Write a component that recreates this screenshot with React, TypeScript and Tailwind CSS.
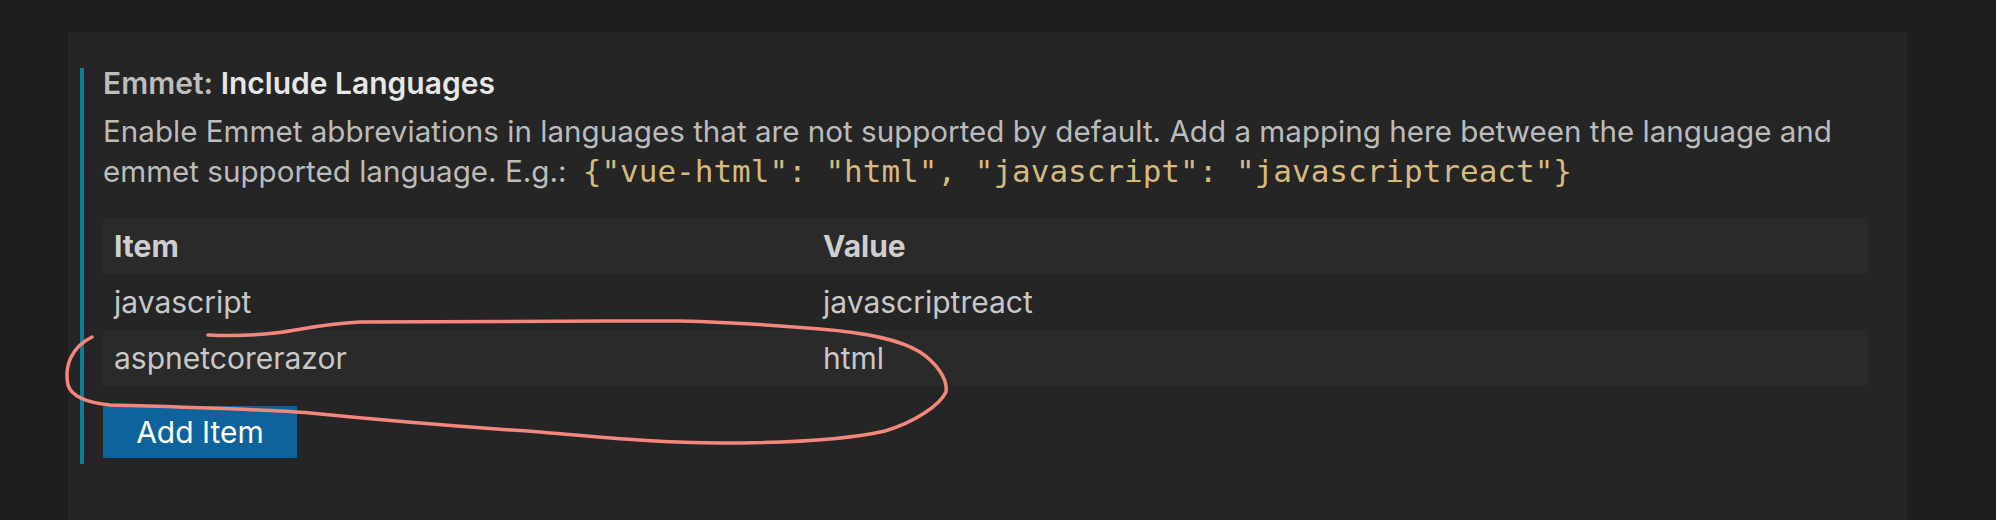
const rows = [
  { item: "javascript", value: "javascriptreact" },
  { item: "aspnetcorerazor", value: "html" },
]

function Scribble() {
  // hand-drawn highlight loop around the second row
  return (
    <svg
      className="pointer-events-none absolute left-0 top-0"
      width="1996"
      height="520"
      viewBox="0 0 1996 520"
      fill="none"
    >
      <path
        d="M92 337 C72 347 64 365 68 385 C72 398 90 403 110 405 C180 407 260 409 310 413 C360 418 450 426 540 432 C600 437 660 443 720 443 C790 443 850 439 885 431 C915 422 940 405 946 392 C948 378 935 362 920 352 C900 340 870 333 820 329 C760 324 720 322 680 321 C560 321 420 321 360 322 C320 324 300 330 275 333 C250 336 230 336 208 335"
        stroke="#f4877c"
        strokeWidth="3.5"
        strokeLinecap="round"
        strokeLinejoin="round"
      />
    </svg>
  )
}

export default function App() {
  return (
    <div className="relative flex h-[520px] w-[1996px] overflow-hidden bg-[#1e1e1e] pl-[68px] pr-[89px] pt-[32px] font-['Inter',sans-serif] text-[30px]">
      <div className="flex-1 bg-[#252526] pl-[12px] pr-[39px] pt-[36px]">
        <div className="border-l-4 border-[#0c7d9d] pb-[6px] pl-[19px]">
          <div className="leading-[30px] font-semibold">
            <span className="text-[#bdbdbd]">Emmet: </span>
            <span className="text-[#e7e7e7]">Include Languages</span>
          </div>
          <p className="mt-[13px] text-[29.6px] leading-[40px] text-[#bcbcbc]">
            Enable Emmet abbreviations in languages that are not supported by default. Add a mapping here between the language and emmet supported language. E.g.:{" "}
            <span className="ml-[8px] font-['DejaVu_Sans_Mono',monospace] text-[31px] leading-[0] text-[#d7ba7d]">
              {'{"vue-html": "html", "javascript": "javascriptreact"}'}
            </span>
          </p>

          <div className="mt-[27px]">
            <div className="flex h-[56px] items-center bg-[#2a2a2a] font-bold text-[#cfcfcf]">
              <div className="w-[709px] pl-[11px]">Item</div>
              <div className="pl-[11px]">Value</div>
            </div>
            {rows.map((row, i) => (
              <div
                key={row.item}
                className={
                  i % 2 === 1
                    ? "flex h-[56px] items-center bg-[#2a2a2a] text-[#c8c8c8]"
                    : "flex h-[56px] items-center text-[#c8c8c8]"
                }
              >
                <div className="w-[709px] pl-[11px]">{row.item}</div>
                <div className="pl-[11px]">{row.value}</div>
              </div>
            ))}
          </div>

          <button className="mt-[20px] flex h-[52px] w-[194px] items-center justify-center bg-[#0e639c] text-white">
            Add Item
          </button>
        </div>
      </div>
      <Scribble />
    </div>
  )
}
